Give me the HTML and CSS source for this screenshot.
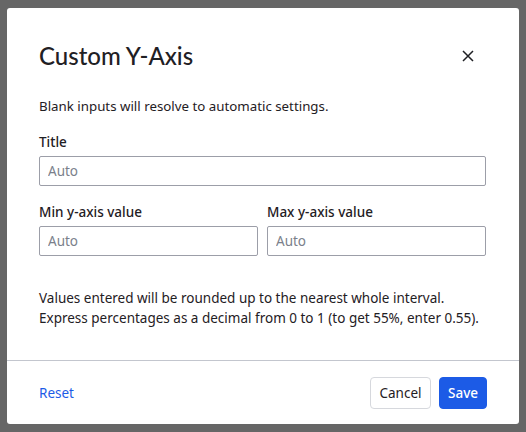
FILE: index.html
```html
<!DOCTYPE html>
<html>
<head>
<meta charset="utf-8">
<link rel="stylesheet" href="styles.css">
</head>
<body>
<div class="backdrop">
  <div class="dialog">
    <div class="header">
      <h1 class="title">Custom Y-Axis</h1>
      <button class="close" aria-label="Close">
        <svg width="12" height="12" viewBox="0 0 12 12"><path d="M1 1L11 11M11 1L1 11" stroke="#1f2024" stroke-width="1.5" fill="none"/></svg>
      </button>
    </div>
    <div class="content">
      <p class="intro">Blank inputs will resolve to automatic settings.</p>
      <div class="field">
        <label class="label">Title</label>
        <input class="input" placeholder="Auto">
      </div>
      <div class="row">
        <div class="field">
          <label class="label">Min y-axis value</label>
          <input class="input" placeholder="Auto">
        </div>
        <div class="field">
          <label class="label">Max y-axis value</label>
          <input class="input" placeholder="Auto">
        </div>
      </div>
      <p class="note">Values entered will be rounded up to the nearest whole interval.<br>Express percentages as a decimal from 0 to 1 (to get 55%, enter 0.55).</p>
    </div>
    <div class="footer">
      <a class="reset">Reset</a>
      <div class="actions">
        <button class="btn cancel">Cancel</button>
        <button class="btn save">Save</button>
      </div>
    </div>
  </div>
</div>
</body>
</html>
```
FILE: styles.css
```css
html, body {
  margin: 0;
  padding: 0;
  background: #666666;
  width: 526px;
  height: 432px;
  overflow: hidden;
}
.backdrop {
  padding: 8px 0 0 7px;
}
.dialog {
  width: 512px;
  height: 416px;
  background: #ffffff;
  border-radius: 3px;
  box-sizing: border-box;
  display: flex;
  flex-direction: column;
  font-family: "Noto Sans", sans-serif;
  color: #1f2024;
}
.header {
  display: flex;
  align-items: center;
  justify-content: space-between;
  padding: 32px 32px 0 32px;
}
.title {
  margin: 0;
  font-family: "Lato", sans-serif;
  font-weight: 500;
  font-size: 24px;
  line-height: 32px;
  color: #1f2024;
}
.close {
  background: none;
  border: 0;
  padding: 0;
  width: 16px;
  height: 16px;
  display: flex;
  align-items: center;
  justify-content: center;
  margin-right: 11px;
}
.content {
  padding: 24px 33px 0 32px;
  flex: 1;
}
.intro {
  margin: 0 0 16px 0;
  font-size: 13.3px;
  line-height: 20px;
}
.field {
  display: flex;
  flex-direction: column;
  flex: 1;
}
.label {
  font-size: 13.5px;
  font-weight: 500;
  line-height: 20px;
  margin-bottom: 4px;
}
.input {
  height: 30px;
  box-sizing: border-box;
  border: 1px solid #9c9ea8;
  border-radius: 2px;
  padding: 0 8px;
  font-family: "Noto Sans", sans-serif;
  font-size: 13.5px;
  color: #1f2024;
  outline: none;
}
.input::placeholder {
  color: #7b7f8b;
}
.row {
  display: flex;
  gap: 9px;
  margin-top: 16px;
}
.note {
  margin: 32px 0 0 0;
  font-size: 13.5px;
  line-height: 20px;
}
.footer {
  border-top: 1px solid #c3c6ce;
  padding: 16px 32px 15px 32px;
  display: flex;
  align-items: center;
  justify-content: space-between;
}
.reset {
  color: #1c5be6;
  font-size: 13.5px;
  cursor: pointer;
}
.actions {
  display: flex;
  gap: 8px;
}
.btn {
  height: 32px;
  box-sizing: border-box;
  border-radius: 4px;
  font-family: "Noto Sans", sans-serif;
  font-size: 13.5px;
  padding: 0 8px;
}
.cancel {
  background: #ffffff;
  border: 1px solid #d6d8dd;
  color: #1f2024;
  width: 61px;
}
.save {
  background: #1c5be6;
  border: 1px solid #1c5be6;
  color: #ffffff;
  font-weight: 500;
  width: 48px;
}
```
